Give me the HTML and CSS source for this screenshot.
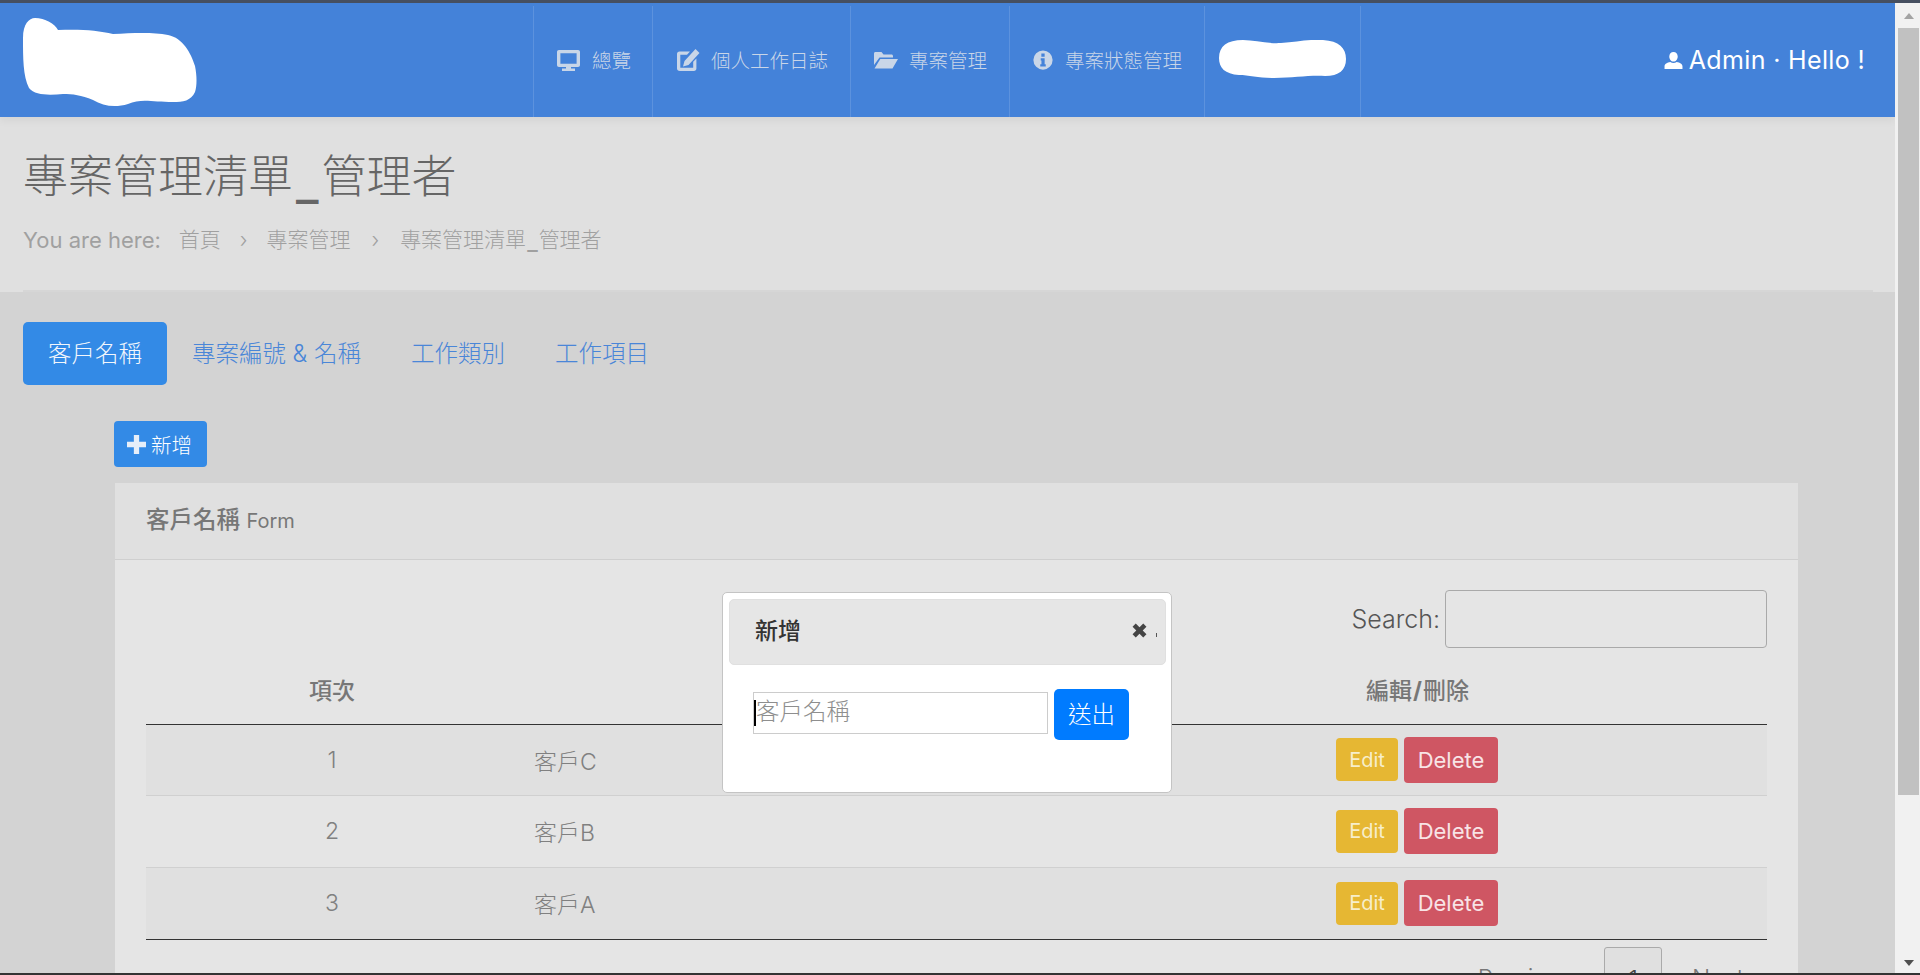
FILE: index.html
```html
<!DOCTYPE html>
<html lang="zh-TW">
<head>
    <meta charset="UTF-8">
    <meta name="viewport" content="width=device-width, initial-scale=1.0">
    <title>專案管理清單_管理者</title>
    <link rel="stylesheet" href="styles.css">
</head>
<body>
    <div class="window">
        <div class="page">
            <nav class="navbar">
                <div class="brand">
                    <svg class="blob-logo" viewBox="0 0 174 90"><path fill="#fff" d="M0 20C0 6 6 0 12 0 22 0 32 6 35 12 55 11 75 12 90 16 110 15 130 14 145 17 160 20 168 35 172 48 174 58 174 68 172 74 168 83 160 84 150 84 130 84 118 80 105 86 92 90 80 88 70 82 58 77 50 76 40 76 28 77 12 78 6 70 0 58 0 40 0 20Z"/></svg>
                </div>
                <ul class="nav-links">
                    <li>
                        <svg class="nav-icon" viewBox="0 0 25 24"><path fill="currentColor" fill-rule="evenodd" d="M3 2h19c1.200 0 2 .8 2 2v13c0 1.200-.8 2-2 2h-7v1.500h4V23H6v-2.500h4V19H3c-1.200 0-2-.8-2-2V4c0-1.200.8-2 2-2zM4.400 5.200v10.600h16.200V5.200z"/></svg>
                        <span>總覽</span>
                    </li>
                    <li>
                        <svg class="nav-icon" viewBox="0 0 25 24"><path fill="currentColor" d="M2 6C2 4.500 3 3.500 4.500 3.500H15L12 6.800H5.300v13h12.900v-6l3.200-3.200V20.500c0 1.500-1 2.500-2.500 2.500h-14C3 23 2 22 2 20.500zM20.500 1L24.500 5 13.500 17 8 18.500 9.500 13z"/></svg>
                        <span>個人工作日誌</span>
                    </li>
                    <li>
                        <svg class="nav-icon" viewBox="0 0 25 24"><path fill="currentColor" d="M1 5.500C1 4.500 1.700 4 2.500 4h6l2 2.500h8c.8 0 1.500.6 1.500 1.500v1.500H6.500L1 17zM7.300 11H25l-5.500 9.500h-18z"/></svg>
                        <span>專案管理</span>
                    </li>
                    <li>
                        <svg class="nav-icon info" viewBox="0 0 24 24"><path fill="currentColor" fill-rule="evenodd" d="M12 1.500a10.500 10.500 0 1 0 0 21 10.500 10.500 0 0 0 0-21zM10.200 5h3.600v3.400h-3.600zM9.500 10h4.300v6.500h1.200V19H9v-2.500h1.300v-4H9.500z"/></svg>
                        <span>專案狀態管理</span>
                    </li>
                    <li class="blob-item">
                        <svg class="blob-menu" viewBox="0 0 127 38"><path fill="#fff" d="M0 18C0 6 8 0 24 0 36 0 48 4 62 3 78 2 90-1 104 0 120 1 127 8 127 19 127 30 120 36 106 36 90 35 75 38 55 38 40 38 30 35 20 35 6 34 0 28 0 18Z"/></svg>
                    </li>
                </ul>
                <div class="user-info">
                    <svg class="user-icon" viewBox="0 0 18 18"><path fill="#fff" d="M9 1c2.400 0 4 1.800 4 4.200S11.400 10 9 10 5 7.600 5 5.200 6.600 1 9 1zM0.500 17v-2.500C.5 12.500 3 11 6 10.500c1.800 1.200 4.200 1.200 6 0 3 .5 5.500 2 5.500 4V17z"/></svg>
                    <span>Admin · Hello !</span>
                </div>
            </nav>

            <header class="page-head">
                <h1>專案管理清單<span class="us">_</span>管理者</h1>
                <div class="breadcrumb">
                    <span class="here">You are here:</span>
                    <span>首頁</span>
                    <span class="sep">›</span>
                    <span>專案管理</span>
                    <span class="sep sep-last">›</span>
                    <span>專案管理清單<span class="us">_</span>管理者</span>
                </div>
            </header>

            <main class="content">
                <ul class="tabs">
                    <li class="active">客戶名稱</li>
                    <li>專案編號 &amp; 名稱</li>
                    <li>工作類別</li>
                    <li>工作項目</li>
                </ul>

                <div class="panel-wrap">
                    <button class="btn-add">
                        <svg class="plus-icon" viewBox="0 0 18 18"><path fill="currentColor" d="M6.500 0h5v6.500H18v5h-6.500V18h-5v-6.500H0v-5h6.500z"/></svg>
                        新增
                    </button>

                    <section class="card">
                        <div class="card-head"><b>客戶名稱</b> <small>Form</small></div>
                        <div class="card-body">
                            <div class="search-row">
                                <label for="search">Search:</label>
                                <input id="search" type="text">
                            </div>
                            <table class="data-table">
                                <thead>
                                    <tr>
                                        <th class="col-no">項次</th>
                                        <th class="col-name">客戶名稱</th>
                                        <th class="col-action">編輯<b>/</b>刪除</th>
                                    </tr>
                                </thead>
                                <tbody>
                                    <tr>
                                        <td class="col-no">1</td>
                                        <td>客戶C</td>
                                        <td><button class="btn-edit">Edit</button><button class="btn-delete">Delete</button></td>
                                    </tr>
                                    <tr>
                                        <td class="col-no">2</td>
                                        <td>客戶B</td>
                                        <td><button class="btn-edit">Edit</button><button class="btn-delete">Delete</button></td>
                                    </tr>
                                    <tr>
                                        <td class="col-no">3</td>
                                        <td>客戶A</td>
                                        <td><button class="btn-edit">Edit</button><button class="btn-delete">Delete</button></td>
                                    </tr>
                                </tbody>
                            </table>
                            <div class="pager">
                                <span>Previous</span>
                                <span class="current">1</span>
                                <span>Next</span>
                            </div>
                        </div>
                    </section>
                </div>
            </main>

            <div class="modal">
                <div class="modal-head">
                    <span class="modal-title">新增</span>
                    <svg class="close-icon" viewBox="0 0 14 14"><path fill="#444" d="M3.500.5L7 4 10.500.5 13.500 3.500 10 7l3.500 3.500-3 3L7 10l-3.500 3.500-3-3L4 7 .5 3.500z"/></svg>
                    <span class="close-dot"></span>
                </div>
                <form class="modal-form">
                    <div class="fake-input"><i class="caret"></i>客戶名稱</div>
                    <button type="button" class="btn-send">送出</button>
                </form>
            </div>
        </div>

        <div class="scrollbar">
            <span class="arrow-up"></span>
            <span class="thumb"></span>
            <span class="arrow-down"></span>
        </div>
    </div>
</body>
</html>
```

FILE: styles.css
```css
* {
    box-sizing: border-box;
}
html, body {
    height: 100%;
    margin: 0;
    overflow: hidden;
}
body {
    font-family: Inter, "Noto Sans CJK TC", sans-serif;
    font-weight: 300;
    color: #777;
    background-color: #d3d3d3;
}
ul {
    list-style: none;
    margin: 0;
    padding: 0;
}
button {
    font-family: inherit;
    border: 0;
    color: #fff;
}
.window {
    display: flex;
    height: 100vh;
    border-top: 3px solid #464f60;
    border-bottom: 2px solid #333;
}
.page {
    position: relative;
    flex: 1;
    min-width: 0;
    overflow: hidden;
}
.us {
    font-family: "DejaVu Sans", sans-serif;
    font-weight: 700;
    padding: 0 3px;
}

/* navbar */
.navbar {
    display: flex;
    height: 114px;
    background-color: #4482d9;
    position: relative;
    z-index: 1;
    box-shadow: 0 4px 8px rgba(0, 0, 0, 0.05);
}
.brand {
    width: 533px;
    padding: 15px 0 0 23px;
}
.blob-logo {
    display: block;
    width: 174px;
    height: 90px;
}
.nav-links {
    display: flex;
    margin-top: 3px;
    border-right: 1px solid rgba(255, 255, 255, 0.13);
}
.nav-links li {
    display: flex;
    align-items: center;
    gap: 11px;
    padding: 0 22px 4px;
    font-size: 19.500px;
    color: #c9d6e8;
    border-left: 1px solid rgba(255, 255, 255, 0.13);
}
.nav-links li:first-child {
    padding-right: 21px;
}
.nav-icon {
    width: 25px;
    height: 24px;
}
.nav-icon.info {
    width: 22px;
    height: 22px;
}
.nav-links li.blob-item {
    width: 156px;
    padding: 0 0 4px 14px;
}
.blob-menu {
    display: block;
    width: 127px;
    height: 38px;
    margin-bottom: 2px;
}
.user-info {
    display: flex;
    align-items: center;
    gap: 6px;
    margin-left: auto;
    padding: 0 30px 0 0;
    font-size: 25px;
    letter-spacing: 0.35px;
    font-weight: 400;
    color: #fff;
}
.user-icon {
    width: 19px;
    height: 19px;
}

/* page head */
.page-head {
    height: 175px;
    padding: 30px 23px 0;
    background-color: #e0e0e0;
    position: relative;
}
.page-head::after {
    content: "";
    position: absolute;
    left: 23px;
    right: 22px;
    bottom: 0;
    height: 2px;
    background-color: #d6d6d6;
}
.page-head h1 {
    margin: 0;
    font-size: 45px;
    line-height: 60px;
    font-weight: 300;
    color: #666;
}
.breadcrumb {
    display: flex;
    gap: 18px;
    margin-top: 17px;
    font-size: 21px;
    line-height: 30px;
    color: #a0a0a0;
}
.breadcrumb .here {
    font-size: 22px;
    font-weight: 400;
}
.breadcrumb .sep {
    margin: 0 1px;
}
.breadcrumb .sep-last {
    margin: 0 3px;
}
.breadcrumb .us {
    padding: 0 1px;
}

/* tabs */
.content {
    padding: 30px 0 0 23px;
}
.tabs {
    display: flex;
}
.tabs li {
    height: 63px;
    padding: 0 25px;
    font-size: 23.500px;
    line-height: 63px;
    color: #4a86d8;
    border-radius: 5px;
}
.tabs li.active {
    color: #f2f6fc;
    background-color: #338ae6;
}

/* card */
.panel-wrap {
    margin: 36px 0 0 91px;
    width: 1684px;
}
.btn-add {
    display: flex;
    align-items: center;
    gap: 5px;
    width: 93px;
    height: 46px;
    padding: 0 0 0 13px;
    font-size: 20.500px;
    font-weight: 300;
    background-color: #338ae6;
    border-radius: 4px;
}
.plus-icon {
    width: 19px;
    height: 19px;
    color: #e6eef9;
}
.card {
    margin: 16px 0 0 1px;
    border-radius: 3px 3px 0 0;
    background-color: #e5e5e5;
}
.card-head {
    height: 77px;
    padding: 0 31px;
    line-height: 74px;
    background-color: #e0e0e0;
    border-bottom: 1px solid #cfcfcf;
    color: #777;
}
.card-head b {
    font-size: 23.500px;
    font-weight: 500;
}
.card-head small {
    font-size: 20px;
    font-weight: 400;
    margin-left: 2px;
}
.card-body {
    padding: 30px 31px 0;
}
.search-row {
    display: flex;
    justify-content: flex-end;
    align-items: center;
    gap: 5px;
    height: 58px;
}
.search-row label {
    font-size: 25px;
    color: #555;
}
.search-row input {
    width: 322px;
    height: 58px;
    background: transparent;
    border: 1px solid #a9a9a9;
    border-radius: 4px;
}

/* table */
.data-table {
    width: 100%;
    margin-top: 9px;
    border-collapse: collapse;
    table-layout: fixed;
    font-size: 23px;
    color: #808080;
}
.data-table th {
    height: 67px;
    font-size: 23px;
    font-weight: 500;
    color: #777;
    text-align: left;
    border-bottom: 1px solid #333;
    padding: 0 0 3px 46px;
}
.data-table th b {
    font-weight: 700;
    padding: 0 1px;
}
.data-table .col-no {
    width: 372px;
    text-align: center;
    padding-left: 0;
    padding-right: 0;
}
.data-table .col-name {
    width: 802px;
    text-align: center;
}
.data-table td {
    height: 72px;
    padding: 0 16px;
    border-bottom: 1px solid #d0d0d0;
}
.data-table tbody tr:first-child td {
    height: 71px;
}
.data-table tbody tr:nth-child(odd) {
    background-color: #e0e0e0;
}
.data-table tbody tr:last-child td {
    border-bottom: 1px solid #333;
}
.data-table button {
    vertical-align: middle;
    border-radius: 4px;
    font-weight: 400;
}
.btn-edit {
    width: 62px;
    height: 43px;
    margin-right: 6px;
    font-size: 20px;
    color: #f7eecb;
    background-color: #e6b733;
}
.btn-delete {
    width: 94px;
    height: 46px;
    font-size: 22px;
    color: #f8e4e6;
    background-color: #cf5663;
}
.pager {
    display: flex;
    justify-content: flex-end;
    align-items: flex-start;
    gap: 30px;
    margin-top: 7px;
    padding-right: 23px;
    font-size: 24px;
    color: #777;
}
.pager span {
    line-height: 64px;
}
.pager .current {
    width: 58px;
    height: 64px;
    text-align: center;
    border: 1px solid #aaa;
    border-radius: 3px;
    color: #444;
    background-color: #e0e0e0;
}

/* modal */
.modal {
    position: absolute;
    left: 722px;
    top: 589px;
    width: 450px;
    height: 201px;
    padding: 6px 5px 5px 6px;
    background-color: #fff;
    border: 1px solid #c4c4c4;
    border-radius: 5px;
    z-index: 2;
}
.modal-head {
    display: flex;
    align-items: center;
    height: 66px;
    padding: 0 25px 4px;
    background-color: #e6e6e6;
    border: 1px solid #e0e0e0;
    border-radius: 5px;
}
.modal-title {
    flex: 1;
    margin-top: -3px;
    font-size: 23px;
    font-weight: 500;
    color: #333;
}
.close-icon {
    width: 15px;
    height: 15px;
    margin-right: -2px;
}
.close-dot {
    width: 1px;
    height: 4px;
    margin: 10px -17px 0 11px;
    background-color: #555;
}
.modal-form {
    display: flex;
    align-items: flex-start;
    gap: 6px;
    margin: 24px 0 0 24px;
}
.fake-input {
    position: relative;
    width: 295px;
    height: 42px;
    margin-top: 3px;
    padding-left: 2px;
    font-size: 23.500px;
    line-height: 38px;
    color: #8e8e8e;
    border: 1px solid #ccc;
}
.caret {
    position: absolute;
    left: 0;
    top: 7px;
    width: 2px;
    height: 26px;
    background-color: #000;
}
.btn-send {
    width: 75px;
    height: 51px;
    padding: 0 0 4px;
    font-size: 23.500px;
    font-weight: 300;
    background-color: #007bff;
    border-radius: 5px;
}

/* scrollbar drawn beside the page */
.scrollbar {
    display: flex;
    flex-direction: column;
    align-items: center;
    width: 25px;
    padding: 0 0 0 2px;
    background-color: #f1f1f1;
    position: relative;
}
.arrow-up, .arrow-down {
    width: 0;
    height: 0;
    border-left: 5px solid transparent;
    border-right: 5px solid transparent;
}
.arrow-up {
    margin-top: 10px;
    border-bottom: 6px solid #a3a3a3;
}
.arrow-down {
    position: absolute;
    bottom: 7px;
    border-top: 6px solid #505050;
}
.thumb {
    width: 21px;
    height: 767px;
    margin-top: 9px;
    background-color: #c1c1c1;
}
```
